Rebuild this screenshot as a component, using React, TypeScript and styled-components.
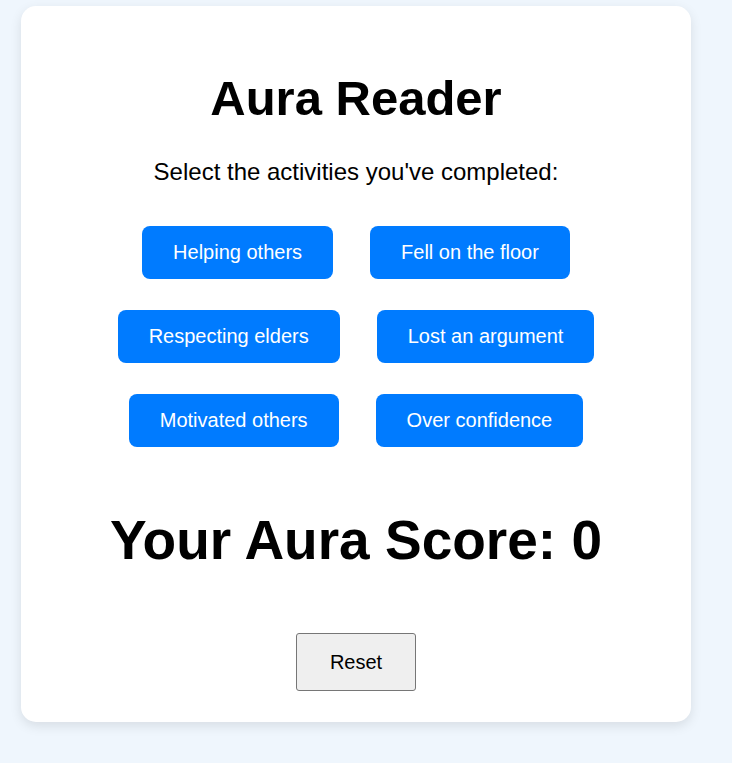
import React, { useState } from "react";
import styled, { createGlobalStyle } from "styled-components";

const GlobalStyle = createGlobalStyle`
  html, body {
    margin: 0;
    padding: 0;
    background: #eff6fd;
    font-family: "Liberation Sans", Arial, sans-serif;
  }
`;

const Page = styled.div`
  min-height: 763px;
  box-sizing: border-box;
  padding: 6px 0 0 21px;
  background: #eff6fd;
`;

const Card = styled.div`
  width: 670px;
  box-sizing: border-box;
  background: #ffffff;
  border-radius: 15px;
  box-shadow: 0 4px 12px rgba(0, 0, 0, 0.1);
  padding: 64px 35px 31px;
  display: flex;
  flex-direction: column;
  align-items: center;
  color: #000;
`;

const Title = styled.h1`
  margin: 0 0 32px;
  font-size: 49px;
  font-weight: bold;
  line-height: normal;
`;

const Subtitle = styled.p`
  margin: 0 0 40px;
  font-size: 24px;
  line-height: normal;
`;

const Activities = styled.div`
  width: 520px;
  display: flex;
  flex-wrap: wrap;
  justify-content: center;
  gap: 31px 37px;
  margin: 0 0 61px;
`;

const ActivityButton = styled.button<{ $active: boolean }>`
  font-family: "Liberation Sans", Arial, sans-serif;
  font-size: 20px;
  line-height: normal;
  padding: 15px 31px;
  border: none;
  border-radius: 8px;
  color: #ffffff;
  background: ${(p) => (p.$active ? "#0056b3" : "#007bff")};
  cursor: pointer;
`;

const Score = styled.h2`
  margin: 0 0 61px;
  font-size: 55px;
  font-weight: bold;
  line-height: normal;
`;

const ResetButton = styled.button`
  font-family: "Liberation Sans", Arial, sans-serif;
  font-size: 20px;
  line-height: normal;
  color: #000;
  background: #efefef;
  border: 1px solid #767676;
  border-radius: 3px;
  padding: 16.5px 33px;
  cursor: pointer;
`;

const activities = [
  { label: "Helping others", value: 10 },
  { label: "Fell on the floor", value: -5 },
  { label: "Respecting elders", value: 10 },
  { label: "Lost an argument", value: -5 },
  { label: "Motivated others", value: 10 },
  { label: "Over confidence", value: -10 },
];

export default function App() {
  const [selected, setSelected] = useState<number[]>([]);
  const score = selected.reduce((s, i) => s + activities[i].value, 0);
  const toggle = (i: number) =>
    setSelected((prev) =>
      prev.includes(i) ? prev.filter((x) => x !== i) : [...prev, i]
    );
  return (
    <>
      <GlobalStyle />
      <Page>
        <Card>
          <Title>Aura Reader</Title>
          <Subtitle>Select the activities you've completed:</Subtitle>
          <Activities>
            {activities.map((a, i) => (
              <ActivityButton
                key={a.label}
                $active={selected.includes(i)}
                onClick={() => toggle(i)}
              >
                {a.label}
              </ActivityButton>
            ))}
          </Activities>
          <Score>Your Aura Score: {score}</Score>
          <ResetButton onClick={() => setSelected([])}>Reset</ResetButton>
        </Card>
      </Page>
    </>
  );
}
